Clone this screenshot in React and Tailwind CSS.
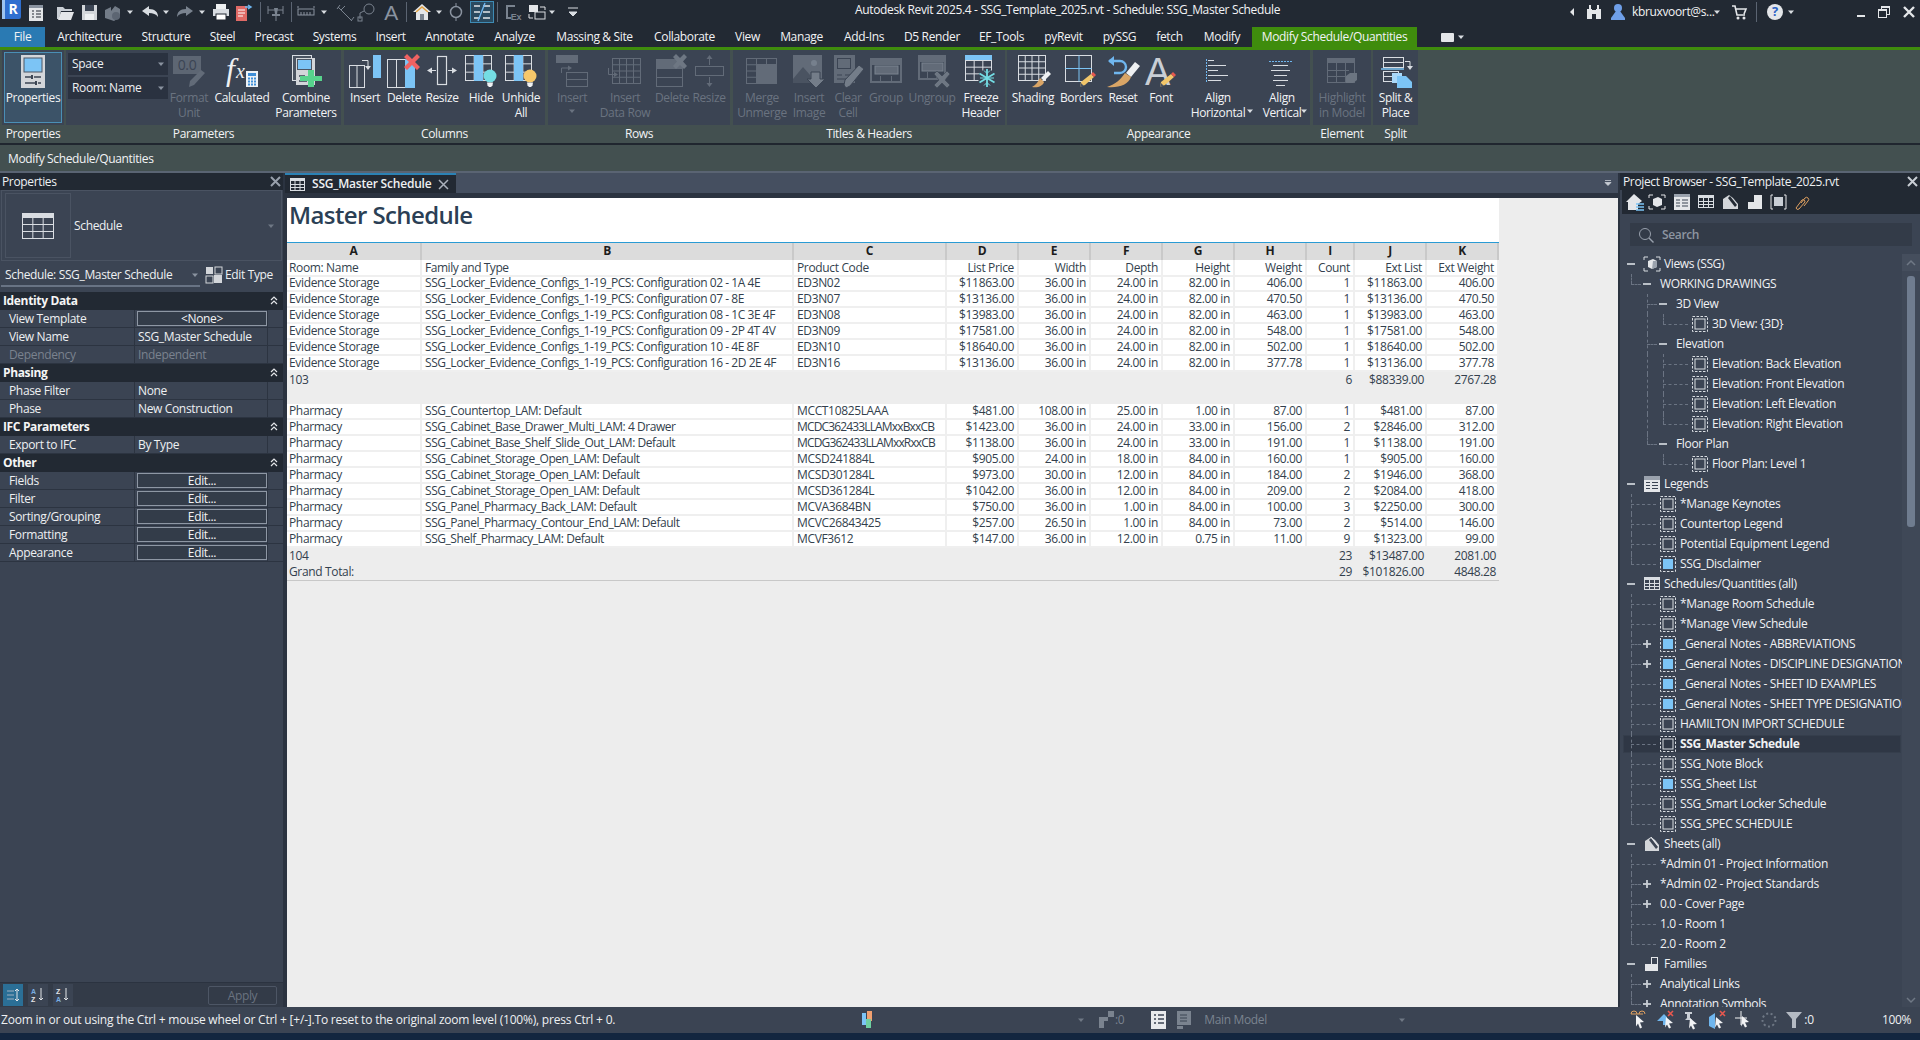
import React from "react";

const W = "#d9dde2";
const B = "#7cc4f5";
const D = "#626b78";

const S = ({ w = 32, h = 32, className = "", children }) => (
  <svg width={w} height={h} viewBox={`0 0 ${w} ${h}`} className={`shrink-0 overflow-visible ${className}`} fill="none">
    {children}
  </svg>
);

const Caret = ({ className = "", color = "#d9dde2" }) => (
  <svg width="8" height="8" viewBox="0 0 8 8" className={`shrink-0 ${className}`}>
    <path d="M1 2.5h6L4 6z" fill={color} />
  </svg>
);

const Grid = ({ x, y, w, h, cols, rows, stroke, sw = 1 }) => {
  const l = [];
  for (let i = 1; i < cols; i++) l.push(<path key={`c${i}`} d={`M${x + (w * i) / cols} ${y}v${h}`} />);
  for (let i = 1; i < rows; i++) l.push(<path key={`r${i}`} d={`M${x} ${y + (h * i) / rows}h${w}`} />);
  return (
    <g stroke={stroke} strokeWidth={sw}>
      <rect x={x} y={y} width={w} height={h} fill="none" />
      {l}
    </g>
  );
};

/* ---------- ribbon icons ---------- */
const Pencil = ({ x = 0, y = 0 }) => (
  <g transform={`translate(${x} ${y})`}>
    <path d="M11 2l3 3-9 8-5 2 1-5z" fill="#f2c66a" />
    <path d="M0 15l1-4 3 3z" fill="#4a5361" />
    <path d="M11 2l2-2 3 3-2 2z" fill="#e8584f" />
  </g>
);
const IProps = () => (
  <S w={28} h={34}>
    <rect x="2" y="0" width="24" height="33" fill="#d3d6da" />
    <rect x="5" y="3" width="18" height="14" fill={B} stroke="#4c5664" />
    <path d="M6 22h6M15 22h7M6 28h10M19 28h3" stroke="#3b4453" strokeWidth="1.4" />
    <path d="M13 20v4M17 26v4" stroke="#3b4453" strokeWidth="2" />
  </S>
);
const IFormat = () => (
  <S>
    <rect x="0" y="2" width="28" height="18" fill="#5d6673" />
    <text x="14" y="16" textAnchor="middle" fontSize="14" fill="#3b4453" fontFamily="Open Sans">0.0</text>
    <path d="M28 16l4 3-11 12-5 2 1-6z" fill="#626b78" />
  </S>
);
const ICalc = () => (
  <S h={33}>
    <text x="0" y="26" fontFamily="Liberation Serif" fontStyle="italic" fontSize="32" fill="#eef0f2">f</text>
    <text x="10" y="24" fontFamily="Liberation Serif" fontStyle="italic" fontSize="20" fill="#eef0f2">x</text>
    <rect x="20" y="17" width="12" height="16" fill="#eef2f6" />
    <rect x="22" y="19" width="8" height="3" fill="#3f8fd8" />
    <path d="M22 24.500h8M22 27.500h8M22 30.500h8" stroke="#3f8fd8" strokeWidth="1.800" strokeDasharray="2 1" />
  </S>
);
const ICombine = () => (
  <S w={32} h={34}>
    <rect x="2.500" y="1.500" width="19" height="25" stroke={W} fill="#4b5461" />
    <rect x="6" y="4" width="19" height="27" fill="#d3d6da" />
    <rect x="7.500" y="5.500" width="14" height="10" fill={B} stroke="#4c5664" />
    <path d="M9 22h6M9 27h8" stroke="#3b4453" strokeWidth="1.400" />
    <path d="M18 16h6v6h8v5h-8v6h-6v-6h-8v-5h8z" fill="#57d38c" />
  </S>
);
const IColInsert = () => (
  <S w={36} h={34}>
    <rect x="2.500" y="11.500" width="15" height="22" stroke={W} />
    <path d="M10 11.500v22" stroke={W} />
    <path d="M15 6.500h6v6" stroke={W} />
    <path d="M18 12h6l-3 4z" fill={W} />
    <rect x="26" y="1" width="8" height="23" fill={B} />
  </S>
);
const IColDelete = () => (
  <S w={36} h={34}>
    <rect x="1.500" y="5.500" width="27" height="28" stroke={W} />
    <path d="M10.500 5.500v28M19.500 5.500v28" stroke={W} />
    <rect x="19" y="5" width="10" height="29" fill={B} />
    <path d="M26 5l5-5 3 3-5 5 5 5-3 3-5-5-5 5-3-3 5-5-5-5 3-3z" fill="#f06262" />
  </S>
);
const IColResize = () => (
  <S w={32}>
    <rect x="11.500" y="2.500" width="9" height="28" stroke={W} strokeWidth="1.200" />
    <path d="M5 16.500h5M22 16.500h5" stroke={W} />
    <path d="M1 16.500l5-3v6zM31 16.500l-5-3v6z" fill={W} />
  </S>
);
const IHide = ({ bulb = "#74dde4" }) => (
  <S w={34} h={34}>
    <Grid x={1.500} y={1.500} w={26} h={25} cols={3} rows={3} stroke={W} />
    <rect x="10" y="1" width="9" height="26" fill={B} />
    <circle cx="26" cy="22" r="6.500" fill={bulb} />
    <path d="M23 28.500h6l-.5 3-1.500 1.500h-2l-1.500-1.500z" fill="#eef0f2" />
  </S>
);
const IRowInsert = () => (
  <S w={36} h={34}>
    <rect x="2" y="1" width="22" height="8" fill={D} />
    <path d="M7.500 19v-5h8" stroke={D} />
    <path d="M14 11.500l4 2.500-4 2.500z" fill={D} />
    <rect x="12.500" y="18.500" width="21" height="14" stroke={D} />
    <path d="M12.500 25.500h21" stroke={D} />
  </S>
);
const IRowData = () => (
  <S w={36} h={34}>
    <Grid x={5.500} y={4.500} w={28} h={25} cols={4} rows={4} stroke={D} />
    <path d="M1.500 14v6.500h7" stroke={D} />
    <path d="M7 18l4 2.500-4 2.500z" fill={D} />
  </S>
);
const IRowDelete = () => (
  <S w={32} h={34}>
    <rect x="0" y="5" width="27" height="9" fill={D} />
    <rect x="0.500" y="14.500" width="26" height="18" stroke={D} />
    <path d="M0.500 23.500h26" stroke={D} />
    <path d="M24 4l4-4 3 3-4 4.500 4 4.500-3 3-4-4-4 4-3-3 4-4.500-4-4.500 3-3z" fill="#6e7783" />
  </S>
);
const IRowResize = () => (
  <S w={31} h={34}>
    <rect x="1.500" y="12.500" width="28" height="9" stroke={D} />
    <path d="M15.500 5v6M15.500 23v7" stroke={D} />
    <path d="M15.500 1l3 4h-6zM15.500 33l3-4h-6z" fill={D} />
  </S>
);
const IMerge = () => (
  <S h={34}>
    <Grid x={0.500} y={4.500} w={30} h={25} cols={3} rows={4} stroke={D} />
    <rect x="10" y="10" width="21" height="20" fill={D} />
  </S>
);
const IImg = () => (
  <S h={34}>
    <rect x="0" y="1" width="29" height="28" fill={D} />
    <circle cx="21" cy="9" r="3" fill="#76808d" />
    <path d="M0 25l10-12 7 8 2 8H0z" fill="#4a5361" />
    <path d="M18 18h9v7h5l-9 9-9-9h4z" fill="#747d89" stroke="#3b4453" />
  </S>
);
const IClear = () => (
  <S h={34}>
    <rect x="2" y="1" width="21" height="28" fill={D} />
    <rect x="5.500" y="4.500" width="13" height="10" stroke="#3b4453" />
    <path d="M5 21h5M13 21h6M5 25h10" stroke="#3b4453" />
    <path d="M27 11l5 4-14 17-4 2-2-3 1-5z" fill="#747d89" stroke="#3b4453" />
  </S>
);
const IGroup = () => (
  <S h={34}>
    <rect x="0" y="4" width="32" height="25" fill={D} />
    <rect x="1.500" y="10.500" width="29" height="17" fill="#3b4453" stroke={D} />
    <path d="M10.500 22v6M21.500 22v6" stroke={D} />
    <rect x="5" y="12" width="23" height="8" fill={D} stroke="#7a838f" />
  </S>
);
const IUngroup = () => (
  <S h={34}>
    <rect x="2" y="1" width="28" height="25" fill={D} />
    <rect x="3.500" y="7.500" width="25" height="17" fill="#3b4453" stroke={D} />
    <rect x="6" y="9" width="21" height="8" fill={D} stroke="#7a838f" />
    <path d="M11.500 18v6M20.500 18v6" stroke={D} />
    <path d="M26 22l5-5 3 3-5 6 5 5-3 3-5-5-5 5-3-3 5-5-5-6 3-3z" fill="#6e7783" stroke="#3b4453" strokeWidth="0.600" />
  </S>
);
const IFreeze = () => (
  <S w={36} h={34}>
    <rect x="2" y="1" width="27" height="5" fill={B} />
    <Grid x={2.500} y={6.500} w={26} h={20} cols={3} rows={3} stroke={W} />
    <circle cx="24" cy="24" r="9" fill="#3b4453" />
    <path d="M24 15v18M16.500 19.500l15 9M16.500 28.500l15-9" stroke="#74dde4" strokeWidth="1.800" />
    <path d="M21 16.500l3 3 3-3M21 31.500l3-3 3 3M17 24h14" stroke="#74dde4" />
  </S>
);
const IShade = () => (
  <S w={36} h={34}>
    <Grid x={3.500} y={1.500} w={27} h={25} cols={4} rows={4} stroke={W} />
    <path d="M33 17l3 3-7 7-3-3z" fill="#eef0f2" />
    <path d="M25 24l4 4c-1 4-6 6-12 5 4-2 6-5 8-9z" fill="#d9a566" />
  </S>
);
const IBorders = () => (
  <S w={34} h={34}>
    <rect x="1.500" y="1.500" width="26" height="26" stroke={W} />
    <path d="M15 1.500v26M1.500 14.500h26" stroke={B} />
    <Pencil x={16} y={18} />
  </S>
);
const IReset = () => (
  <S w={34} h={34}>
    <path d="M3 7h11a6 6 0 0 1 0 12H8" stroke="#6fb6ee" strokeWidth="2.400" />
    <path d="M2 7l6-5v10z" fill="#6fb6ee" />
    <path d="M29 8l5 4-9 11-5-4z" fill="#eef0f2" />
    <path d="M19 19l6 4c-3 8-12 11-24 10 9-3 13-7 18-14z" fill="#d9a566" />
  </S>
);
const IFont = () => (
  <S w={34} h={34}>
    <text x="1" y="31" fontFamily="Liberation Sans" fontSize="38" fill="#c9ced5">A</text>
    <Pencil x={16} y={18} />
  </S>
);
const IAlignH = () => (
  <S h={34}>
    <path d="M4.500 5v24" stroke="#6fb6ee" strokeDasharray="2 1" />
    <path d="M6 6.500h6M6 11.500h18M6 16.500h10M6 21.500h20M6 26.500h13" stroke={W} />
  </S>
);
const IAlignV = () => (
  <S h={34}>
    <path d="M3 7.500h23" stroke="#6fb6ee" strokeDasharray="2 1" />
    <path d="M7 11.500h15M5 16.500h19M8 21.500h13M7 26.500h15M10 31.500h9" stroke={W} />
  </S>
);
const IHighlight = () => (
  <S w={34} h={34}>
    <rect x="2.500" y="4.500" width="27" height="24" stroke={D} />
    <rect x="2" y="4" width="28" height="5" fill={D} />
    <path d="M2 16.500h22M2 22.500h18M11.500 9v20M20.500 9v20" stroke={D} />
    <path d="M21 22l4-3h7v7l-4 3h-7z" fill="#6c7581" />
  </S>
);
const ISplit = () => (
  <S w={34} h={34}>
    <rect x="4.500" y="3.500" width="20" height="10" stroke={W} />
    <path d="M4.500 8.500h20" stroke={W} />
    <path d="M2 15h23" stroke={B} strokeWidth="1.500" />
    <rect x="4.500" y="17.500" width="15" height="10" stroke={W} />
    <path d="M4.500 22.500h15M26 7.500h5v5" stroke={W} />
    <path d="M28 12h6l-3 4z" fill={W} />
    <rect x="13" y="19" width="10" height="10" fill="#aad8f8" />
    <path d="M18 22h9l6 6v6H18z" fill={B} />
  </S>
);

/* ---------- ribbon buttons ---------- */
const RB = ({ w, icon, lines, off, caret }) => (
  <div className={`${w} shrink-0 flex flex-col items-center pt-[4px] relative`}>
    <div className="h-[34px] flex items-start justify-center">{icon}</div>
    <div className={`mt-[2px] text-center leading-[15px] whitespace-nowrap ${off ? "text-[#6a7380]" : "text-[#f2f3f5]"}`}>
      {lines.map((l) => (
        <div key={l}>{l}</div>
      ))}
    </div>
    {caret === "under" && <Caret className="mt-[2px]" color="#6a7380" />}
    {caret === "side" && <Caret className="absolute right-[1px] top-[57px]" />}
  </div>
);

const Panel = ({ w, ml = "ml-[2px]", label, children }) => (
  <div className={`${w} ${ml} shrink-0 flex flex-col h-full`}>
    <div className="h-[75px] bg-[#3b4453] flex overflow-hidden">{children}</div>
    <div className="h-[18px] bg-[#435050] text-center text-[#f2f3f5] leading-[18px]">{label}</div>
  </div>
);

const Combo = ({ t }) => (
  <div className="h-[22px] w-[100px] bg-[#2a3240] flex items-center justify-between pl-[4px] pr-[3px] text-[#eef0f2]">
    <span>{t}</span>
    <Caret color="#8a93a0" />
  </div>
);

/* ---------- title bar ---------- */
const T = ({ ml, w = 20, children }) => (
  <S w={w} h={20} className={ml}>
    {children}
  </S>
);
const Sep = ({ ml }) => <div className={`w-px h-[20px] bg-[#5b6472] ${ml}`} />;

const TitleBar = () => (
  <div className="h-[27px] pb-[4px] bg-[#222933] flex items-center text-[#f2f3f5] shrink-0 relative">
    <div className="ml-[2px] w-[19px] h-[20px] -mt-[5px] mr-0 bg-[#2f6fd0] border-l-[3px] border-[#9cc4f0] text-white font-bold text-[14px] leading-[20px] text-center rounded-br-[2px]">
      R
    </div>
    <T ml="ml-[5px]">
      <rect x="3" y="3" width="14" height="16" fill="#e4e6e9" />
      <rect x="3" y="3" width="14" height="3" fill="#8a93a0" />
      <path d="M6 9h2M10 9h5M6 12h2M10 12h5M6 15h2M10 15h5" stroke="#222933" />
    </T>
    <T ml="ml-[9px]">
      <path d="M2 5h6l2 2h7v2H6l-2 8H2z" fill="#c9ced5" />
      <path d="M6 10h13l-3 8H3z" fill="#e4e6e9" />
    </T>
    <T ml="ml-[4px]">
      <rect x="3" y="3" width="15" height="15" fill="#d3d6da" />
      <rect x="6" y="3" width="9" height="6" fill="#3b4453" />
      <rect x="6" y="12" width="9" height="6" fill="#eef0f2" />
    </T>
    <T ml="ml-[3px]">
      <path d="M3 8l6-3v4l4-5 5 3v8l-6 4-9-3z" fill="#737c88" />
      <circle cx="14" cy="14" r="4" fill="#5c6572" />
    </T>
    <Caret className="ml-[4px]" />
    <T ml="ml-[6px]">
      <path d="M2 9l7-5v3c6 0 9 3 9 8-2-3-5-4-9-4v3z" fill="#d9dde2" />
    </T>
    <Caret className="ml-[2px]" />
    <T ml="ml-[5px]">
      <path d="M18 9l-7-5v3c-6 0-9 3-9 8 2-3 5-4 9-4v3z" fill="#7a838f" />
    </T>
    <Caret className="ml-[3px]" />
    <T ml="ml-[5px]">
      <rect x="5" y="2" width="10" height="5" fill="#eef0f2" />
      <rect x="2" y="7" width="16" height="7" fill="#d9dde2" />
      <rect x="5" y="12" width="10" height="6" fill="#fff" stroke="#222933" />
    </T>
    <T ml="ml-[2px]">
      <rect x="3" y="4" width="11" height="15" fill="#e06a66" />
      <path d="M5 8h7M5 11h7M5 14h5" stroke="#fff" />
      <path d="M12 5h5M15 3l3 2-3 2" stroke="#6fb6ee" strokeWidth="1.500" />
    </T>
    <Sep ml="ml-[7px]" />
    <T ml="ml-[5px]">
      <path d="M2 4v8M17 4v8M2 8h15" stroke="#7a838f" />
      <path d="M8 6h4l-1 6h3v2H6v-2h3zM9.500 14h1v5h-1z" fill="#7a838f" />
    </T>
    <Sep ml="ml-[5px]" />
    <T ml="ml-[4px]">
      <rect x="2" y="7" width="16" height="6" stroke="#8a93a0" />
      <path d="M5 10v3M8 10v3M11 10v3M14 10v3M2 4v2M18 4v2" stroke="#8a93a0" />
    </T>
    <Caret className="ml-[4px]" />
    <T ml="ml-[7px]">
      <path d="M3 5l14 14M5 3L2 7M19 15l-3 4M10 4L6 8" stroke="#7a838f" />
    </T>
    <T ml="ml-[2px]">
      <circle cx="12" cy="7" r="5" stroke="#7a838f" />
      <path d="M7 9L3 11v6" stroke="#7a838f" />
      <rect x="1" y="15" width="4" height="4" stroke="#7a838f" />
    </T>
    <T ml="ml-[4px]">
      <text x="10" y="18" textAnchor="middle" fontFamily="Liberation Sans" fontSize="21" fill="#8a93a0">A</text>
    </T>
    <Sep ml="ml-[5px]" />
    <T ml="ml-[5px]">
      <path d="M10 2L1 10h3v8h12v-8h3z" fill="#e4e6e9" />
      <path d="M4 10l6-5 6 5" stroke="#e0a040" fill="none" strokeWidth="1.500" />
      <rect x="8" y="12" width="4" height="6" fill="#7a838f" />
    </T>
    <Caret className="ml-[3px]" />
    <T ml="ml-[3px]">
      <circle cx="10" cy="10" r="5.500" stroke="#8a93a0" strokeWidth="1.500" />
      <path d="M10 1v3M10 16v3" stroke="#8a93a0" />
    </T>
    <div className="ml-[4px] w-[24px] h-[22px] bg-[#2a4a60] border border-[#3e8bb5] flex items-center justify-center">
      <S w={20} h={18}>
        <path d="M2 3h6M2 9h6M2 15h6M11 3h7M11 9h7M11 15h7" stroke="#e4e6e9" strokeWidth="1.500" />
        <path d="M13 0L6 18" stroke="#6fb6ee" strokeWidth="1.400" />
      </S>
    </div>
    <Sep ml="ml-[3px]" />
    <T ml="ml-[5px]">
      <path d="M3 3h9v2H5v10h3v2H3z" fill="#7a838f" />
      <text x="13" y="18" textAnchor="middle" fontFamily="Liberation Sans" fontWeight="700" fontSize="9" fill="#7a838f">Ex</text>
    </T>
    <T ml="ml-[4px]">
      <rect x="2" y="3" width="9" height="7" fill="#e4e6e9" />
      <rect x="8" y="10" width="10" height="7" fill="none" stroke="#d9dde2" />
      <path d="M13 5h5v3M2 12v4h4" stroke="#e4e6e9" />
    </T>
    <Caret className="ml-[1px]" />
    <T ml="ml-[7px]">
      <path d="M5 6h10M6 10h8l-4 4z" stroke="#d9dde2" fill="#d9dde2" />
    </T>
    <span className="ml-[272px] -mt-[3px] whitespace-nowrap">Autodesk Revit 2025.4 - SSG_Template_2025.rvt - Schedule: SSG_Master Schedule</span>
    <div className="ml-auto flex items-center pr-[4px]">
      <S w={6} h={10}>
        <path d="M5 1v8L1 5z" fill="#e4e6e9" />
      </S>
      <S w={16} h={16} className="ml-[11px]">
        <path d="M1 5h5v10H1zM10 5h5v10h-5zM3 1h2v4H3zM11 1h2v4h-2zM6 6h4v4H6z" fill="#e4e6e9" />
      </S>
      <S w={16} h={18} className="ml-[8px]">
        <circle cx="8" cy="5" r="4" fill="#6f9fe8" />
        <path d="M6 8h4l5 7v2H1v-2z" fill="#6f9fe8" />
      </S>
      <span className="ml-[6px] w-[81px] whitespace-nowrap">kbruxvoort@s...</span>
      <Caret />
      <S w={16} h={16} className="ml-[10px]">
        <path d="M1 2h3l2 9h8M5 5h10l-2 5" stroke="#e4e6e9" strokeWidth="1.600" />
        <circle cx="7" cy="14" r="1.500" fill="#e4e6e9" />
        <circle cx="13" cy="14" r="1.500" fill="#e4e6e9" />
      </S>
      <Sep ml="ml-[9px]" />
      <div className="ml-[10px] w-[16px] h-[16px] rounded-full bg-[#e4e6e9] flex items-center justify-center text-[#2b62c4] font-bold text-[13px]">?</div>
      <Caret className="ml-[4px]" />
      <div className="ml-[62px] w-[8px] h-[2px] mt-[8px] bg-[#e4e6e9]" />
      <div className="ml-[13px] relative w-[12px] h-[12px]">
        <div className="absolute right-0 top-0 w-[9px] h-[9px] border border-t-2 border-[#e4e6e9]" />
        <div className="absolute left-0 bottom-0 w-[9px] h-[9px] border border-t-2 border-[#e4e6e9] bg-[#222933]" />
      </div>
      <S w={14} h={14} className="ml-[12px]">
        <path d="M2 2l10 10M12 2L2 12" stroke="#e4e6e9" strokeWidth="2.400" />
      </S>
    </div>
  </div>
);

const tabs = [
  ["Architecture", "w-[85px]"],
  ["Structure", "w-[68px]"],
  ["Steel", "w-[45px]"],
  ["Precast", "w-[58px]"],
  ["Systems", "w-[63px]"],
  ["Insert", "w-[49px]"],
  ["Annotate", "w-[69px]"],
  ["Analyze", "w-[61px]"],
  ["Massing & Site", "w-[99px]"],
  ["Collaborate", "w-[81px]"],
  ["View", "w-[45px]"],
  ["Manage", "w-[63px]"],
  ["Add-Ins", "w-[62px]"],
  ["D5 Render", "w-[74px]"],
  ["EF_Tools", "w-[65px]"],
  ["pyRevit", "w-[59px]"],
  ["pySSG", "w-[53px]"],
  ["fetch", "w-[47px]"],
  ["Modify", "w-[58px]"],
];

const TabBar = () => (
  <div className="h-[20px] bg-[#222933] flex items-stretch shrink-0 text-[#f2f3f5] leading-[20px]">
    <div className="w-[45px] bg-[#2a7ab3] text-center mr-[2px]">File</div>
    {tabs.map(([t, w]) => (
      <div key={t} className={`${w} text-center whitespace-nowrap`}>
        {t}
      </div>
    ))}
    <div className="ml-[1px] w-[165px] bg-[#3f8c0d] text-center whitespace-nowrap">Modify Schedule/Quantities</div>
    <div className="ml-[24px] flex items-center">
      <div className="w-[13px] h-[9px] rounded-[1px] bg-[#e4e6e9]" />
      <Caret className="ml-[3px]" />
    </div>
  </div>
);

const Ribbon = () => (
  <div className="h-[93px] bg-[#435050] flex shrink-0 pb-0 text-[#f2f3f5]">
    <Panel w="w-[62px]" label="Properties">
      <div className="m-[2px] w-[58px] h-[71px] border border-[#4a8fb5] bg-[#3c5368] flex flex-col items-center pt-[2px]">
        <IProps />
        <div className="mt-[1px] leading-[15px]">Properties</div>
      </div>
    </Panel>
    <Panel w="w-[275px]" label="Parameters">
      <div className="ml-[2px] w-[100px] pt-[3px] flex flex-col gap-[2px]">
        <Combo t="Space" />
        <Combo t="Room: Name" />
      </div>
      <RB w="w-[42px]" icon={<IFormat />} lines={["Format", "Unit"]} off />
      <RB w="w-[64px]" icon={<ICalc />} lines={["Calculated"]} />
      <RB w="w-[64px]" icon={<ICombine />} lines={["Combine", "Parameters"]} />
    </Panel>
    <Panel w="w-[201px]" ml="ml-[3px]" label="Columns">
      <div className="w-[1px]" />
      <RB w="w-[40px]" icon={<IColInsert />} lines={["Insert"]} />
      <RB w="w-[38px]" icon={<IColDelete />} lines={["Delete"]} />
      <RB w="w-[38px]" icon={<IColResize />} lines={["Resize"]} />
      <RB w="w-[40px]" icon={<IHide />} lines={["Hide"]} />
      <RB w="w-[40px]" icon={<IHide bulb="#f7c86a" />} lines={["Unhide", "All"]} />
    </Panel>
    <Panel w="w-[182px]" ml="ml-[3px]" label="Rows">
      <div className="w-[2px]" />
      <RB w="w-[44px]" icon={<IRowInsert />} lines={["Insert"]} off caret="under" />
      <RB w="w-[62px]" icon={<IRowData />} lines={["Insert", "Data Row"]} off />
      <RB w="w-[32px]" icon={<IRowDelete />} lines={["Delete"]} off />
      <RB w="w-[42px]" icon={<IRowResize />} lines={["Resize"]} off />
    </Panel>
    <Panel w="w-[272px]" ml="ml-[3px]" label="Titles & Headers">
      <div className="w-[3px]" />
      <RB w="w-[52px]" icon={<IMerge />} lines={["Merge", "Unmerge"]} off />
      <RB w="w-[42px]" icon={<IImg />} lines={["Insert", "Image"]} off />
      <RB w="w-[36px]" icon={<IClear />} lines={["Clear", "Cell"]} off />
      <RB w="w-[40px]" icon={<IGroup />} lines={["Group"]} off />
      <RB w="w-[52px]" icon={<IUngroup />} lines={["Ungroup"]} off />
      <RB w="w-[46px]" icon={<IFreeze />} lines={["Freeze", "Header"]} />
    </Panel>
    <Panel w="w-[303px]" label="Appearance">
      <div className="w-[2px]" />
      <RB w="w-[48px]" icon={<IShade />} lines={["Shading"]} />
      <RB w="w-[48px]" icon={<IBorders />} lines={["Borders"]} />
      <RB w="w-[36px]" icon={<IReset />} lines={["Reset"]} />
      <RB w="w-[40px]" icon={<IFont />} lines={["Font"]} />
      <RB w="w-[74px]" icon={<IAlignH />} lines={["Align", "Horizontal"]} caret="side" />
      <RB w="w-[54px]" icon={<IAlignV />} lines={["Align", "Vertical"]} caret="side" />
    </Panel>
    <Panel w="w-[58px]" ml="ml-[3px]" label="Element">
      <RB w="w-[58px]" icon={<IHighlight />} lines={["Highlight", "in Model"]} off />
    </Panel>
    <Panel w="w-[45px]" label="Split">
      <RB w="w-[45px]" icon={<ISplit />} lines={["Split &", "Place"]} />
    </Panel>
  </div>
);

/* ---------- properties panel ---------- */
const PRow = ({ a, b, btn, off }) => (
  <div className="h-[18px] flex border-b border-[#2c3441]">
    <div className={`w-[135px] pl-[9px] border-r border-[#2c3441] leading-[17px] ${off ? "text-[#7a828e]" : "text-[#eef0f2]"}`}>{a}</div>
    <div className={`w-[133px] border-r border-[#2c3441] pl-[2px] leading-[17px] ${off ? "text-[#7a828e]" : "text-[#eef0f2]"}`}>
      {btn ? (
        <div className="h-[15px] mt-[1px] w-[130px] border border-[#8e97a4] text-center leading-[14px] text-[#f2f3f5] bg-[#333c49]">{b}</div>
      ) : (
        <span className="pl-[1px]">{b}</span>
      )}
    </div>
  </div>
);

const PHead = ({ t }) => (
  <div className="h-[18px] bg-[#222933] flex items-center justify-between pl-[3px] pr-[5px] font-bold text-[#f5f5f5]">
    <span>{t}</span>
    <S w={8} h={10}>
      <path d="M1 4l3-3 3 3M1 8l3-3 3 3" stroke="#e4e6e9" strokeWidth="1.200" />
    </S>
  </div>
);

const PropsPanel = () => (
  <div className="w-[283px] shrink-0 bg-[#3b4453] flex flex-col text-[#eef0f2]">
    <div className="h-[17px] bg-[#222933] flex items-center justify-between pl-[2px] pr-[2px] shrink-0">
      <span>Properties</span>
      <S w={11} h={11}>
        <path d="M1 1l9 9M10 1l-9 9" stroke="#98a0ac" strokeWidth="2" />
      </S>
    </div>
    <div className="mx-[1px] h-[71px] border border-[#4a5362] flex items-center pl-[3px] shrink-0">
      <div className="w-[66px] h-[65px] border border-[#4a5362] flex items-center justify-center">
        <S w={32} h={26}>
          <rect x="0" y="0" width="32" height="5" fill={W} />
          <Grid x={0.500} y={4.500} w={31} h={21} cols={3} rows={3} stroke={W} />
        </S>
      </div>
      <span className="ml-[3px]">Schedule</span>
      <Caret className="ml-auto mr-[6px]" color="#6f7885" />
    </div>
    <div className="h-[27px] flex items-center pl-[5px] relative shrink-0">
      <span className="w-[186px] whitespace-nowrap">Schedule: SSG_Master Schedule</span>
      <Caret color="#8a93a0" />
      <S w={17} h={17} className="ml-[6px]">
        <rect x="1" y="1" width="7" height="7" fill="#d3d6da" />
        <rect x="10" y="1" width="7" height="7" stroke="#d3d6da" />
        <rect x="1" y="10" width="7" height="7" stroke="#d3d6da" />
        <rect x="9" y="9" width="8" height="8" fill="#d3d6da" />
      </S>
      <span className="ml-[3px] whitespace-nowrap">Edit Type</span>
      <div className="absolute left-[1px] bottom-[1px] w-[199px] h-[2px] bg-[#687384]" />
    </div>
    <div className="h-[4px] shrink-0" />
    <PHead t="Identity Data" />
    <PRow a="View Template" b="<None>" btn />
    <PRow a="View Name" b="SSG_Master Schedule" />
    <PRow a="Dependency" b="Independent" off />
    <PHead t="Phasing" />
    <PRow a="Phase Filter" b="None" />
    <PRow a="Phase" b="New Construction" />
    <PHead t="IFC Parameters" />
    <PRow a="Export to IFC" b="By Type" />
    <PHead t="Other" />
    <PRow a="Fields" b="Edit..." btn />
    <PRow a="Filter" b="Edit..." btn />
    <PRow a="Sorting/Grouping" b="Edit..." btn />
    <PRow a="Formatting" b="Edit..." btn />
    <PRow a="Appearance" b="Edit..." btn />
    <div className="flex-1" />
    <div className="h-[25px] bg-[#333b48] border-t border-[#2b3340] flex items-center pl-[3px] pr-[6px] shrink-0">
      <div className="w-[20px] h-[22px] bg-[#2b6f96] flex items-center justify-center">
        <S w={14} h={14}>
          <path d="M1 3h7M1 7h7M1 11h7" stroke="#9fb0c0" />
          <path d="M11 1v12M9 3l2-2 2 2M9 11l2 2 2-2" stroke="#e4e6e9" />
        </S>
      </div>
      <div className="ml-[5px] w-[20px] h-[22px] bg-[#3b4453] flex items-center justify-center">
        <S w={14} h={16}>
          <text x="0" y="7" fontSize="7" fontWeight="700" fontFamily="Liberation Sans" fill="#7aaee0">A</text>
          <text x="0" y="15" fontSize="7" fontWeight="700" fontFamily="Liberation Sans" fill="#e4e6e9">Z</text>
          <path d="M10 1v12M8 11l2 2 2-2" stroke="#e4e6e9" />
        </S>
      </div>
      <div className="ml-[5px] w-[20px] h-[22px] bg-[#3b4453] flex items-center justify-center">
        <S w={14} h={16}>
          <text x="0" y="7" fontSize="7" fontWeight="700" fontFamily="Liberation Sans" fill="#e4e6e9">Z</text>
          <text x="0" y="15" fontSize="7" fontWeight="700" fontFamily="Liberation Sans" fill="#7aaee0">A</text>
          <path d="M10 1v12M8 11l2 2 2-2" stroke="#e4e6e9" />
        </S>
      </div>
      <div className="ml-auto w-[69px] h-[19px] rounded-[2px] border border-[#4d5665] text-center leading-[17px] text-[#6a7380]">Apply</div>
    </div>
  </div>
);

/* ---------- schedule table ---------- */
const cols = "grid grid-cols-[135px_372px_153px_72px_72px_72px_72px_72px_48px_72px_72px]";
const letters = ["A", "B", "C", "D", "E", "F", "G", "H", "I", "J", "K"];
const fields = ["Room: Name", "Family and Type", "Product Code", "List Price", "Width", "Depth", "Height", "Weight", "Count", "Ext List", "Ext Weight"];
const ev = "Evidence Storage";
const lk = "SSG_Locker_Evidence_Configs_1-19_PCS: Configuration ";
const ph = "Pharmacy";
const group1 = [
  [ev, lk + "02 - 1A 4E", "ED3N02", "$11863.00", "36.00 in", "24.00 in", "82.00 in", "406.00", "1", "$11863.00", "406.00"],
  [ev, lk + "07 - 8E", "ED3N07", "$13136.00", "36.00 in", "24.00 in", "82.00 in", "470.50", "1", "$13136.00", "470.50"],
  [ev, lk + "08 - 1C 3E 4F", "ED3N08", "$13983.00", "36.00 in", "24.00 in", "82.00 in", "463.00", "1", "$13983.00", "463.00"],
  [ev, lk + "09 - 2P 4T 4V", "ED3N09", "$17581.00", "36.00 in", "24.00 in", "82.00 in", "548.00", "1", "$17581.00", "548.00"],
  [ev, lk + "10 - 4E 8F", "ED3N10", "$18640.00", "36.00 in", "24.00 in", "82.00 in", "502.00", "1", "$18640.00", "502.00"],
  [ev, lk + "16 - 2D 2E 4F", "ED3N16", "$13136.00", "36.00 in", "24.00 in", "82.00 in", "377.78", "1", "$13136.00", "377.78"],
];
const group2 = [
  [ph, "SSG_Countertop_LAM: Default", "MCCT10825LAAA", "$481.00", "108.00 in", "25.00 in", "1.00 in", "87.00", "1", "$481.00", "87.00"],
  [ph, "SSG_Cabinet_Base_Drawer_Multi_LAM: 4 Drawer", "MCDC362433LLAMxxBxxCB", "$1423.00", "36.00 in", "24.00 in", "33.00 in", "156.00", "2", "$2846.00", "312.00"],
  [ph, "SSG_Cabinet_Base_Shelf_Slide_Out_LAM: Default", "MCDG362433LLAMxxRxxCB", "$1138.00", "36.00 in", "24.00 in", "33.00 in", "191.00", "1", "$1138.00", "191.00"],
  [ph, "SSG_Cabinet_Storage_Open_LAM: Default", "MCSD241884L", "$905.00", "24.00 in", "18.00 in", "84.00 in", "160.00", "1", "$905.00", "160.00"],
  [ph, "SSG_Cabinet_Storage_Open_LAM: Default", "MCSD301284L", "$973.00", "30.00 in", "12.00 in", "84.00 in", "184.00", "2", "$1946.00", "368.00"],
  [ph, "SSG_Cabinet_Storage_Open_LAM: Default", "MCSD361284L", "$1042.00", "36.00 in", "12.00 in", "84.00 in", "209.00", "2", "$2084.00", "418.00"],
  [ph, "SSG_Panel_Pharmacy_Back_LAM: Default", "MCVA3684BN", "$750.00", "36.00 in", "1.00 in", "84.00 in", "100.00", "3", "$2250.00", "300.00"],
  [ph, "SSG_Panel_Pharmacy_Contour_End_LAM: Default", "MCVC26843425", "$257.00", "26.50 in", "1.00 in", "84.00 in", "73.00", "2", "$514.00", "146.00"],
  [ph, "SSG_Shelf_Pharmacy_LAM: Default", "MCVF3612", "$147.00", "36.00 in", "12.00 in", "0.75 in", "11.00", "9", "$1323.00", "99.00"],
];

const Row = ({ cells, head }) => (
  <div className={`${cols} h-[16px] bg-white`}>
    {cells.map((c, i) => (
      <div
        key={i}
        className={`border-r-2 border-b-2 border-[#efefef] whitespace-nowrap ${head ? "leading-[15px]" : "leading-[14px]"} ${i === 1 ? "tracking-[-0.45px]" : ""} ${c.length > 18 && i === 2 ? "tracking-[-0.85px]" : ""} ${i < 3 ? (i === 0 ? "pl-[2px]" : "pl-[3px]") : "text-right pr-[3px]"}`}
      >
        {c}
      </div>
    ))}
  </div>
);

const Sub = ({ t, n, a, b }) => (
  <div className={`${cols} h-[16px] bg-[#ededed] leading-[16px]`}>
    <div className="col-span-8 pl-[2px] whitespace-nowrap">{t}</div>
    <div className="text-right pr-[3px]">{n}</div>
    <div className="text-right pr-[3px]">{a}</div>
    <div className="text-right pr-[3px]">{b}</div>
  </div>
);

const Sheet = () => (
  <div className="w-[1212px] text-[#333f4d] shrink-0">
    <div className="bg-white text-[24px] leading-[34px] pl-[2px] font-semibold tracking-[-0.6px] text-[#2b3f55] border-b border-[#2a9bd4] box-content h-[44px]">Master Schedule</div>
    <div className={`${cols} h-[17px] bg-[#dcdcdc]`}>
      {letters.map((l) => (
        <div key={l} className="text-center font-bold text-[#1c1c1c] leading-[15px] border-r-2 border-[#c9c9c9]">
          {l}
        </div>
      ))}
    </div>
    <Row cells={fields} head />
    {group1.map((r, i) => (
      <Row key={i} cells={r} />
    ))}
    <Sub t="103" n="6" a="$88339.00" b="2767.28" />
    <div className="h-[16px] bg-[#ededed]" />
    {group2.map((r, i) => (
      <Row key={i} cells={r} />
    ))}
    <Sub t="104" n="23" a="$13487.00" b="2081.00" />
    <Sub t="Grand Total:" n="29" a="$101826.00" b="4848.28" />
    <div className="h-[1px] bg-[#c8c8c8]" />
  </div>
);

const Center = () => (
  <div className="w-[1333px] ml-[2px] shrink-0 flex flex-col">
    <div className="h-[20px] bg-[#454f60] flex items-stretch shrink-0">
      <div className="w-[171px] bg-[#222933] border-t-2 border-[#2b82b5] flex items-center pl-[5px] text-[#eef0f2] font-semibold tracking-[-0.2px]">
        <S w={15} h={13}>
          <rect x="0.500" y="0.500" width="14" height="12" stroke={W} />
          <rect x="0" y="0" width="15" height="3" fill={W} />
          <path d="M5 3v10M10 3v10M0 6.500h15M0 9.500h15" stroke={W} />
        </S>
        <span className="ml-[7px] whitespace-nowrap">SSG_Master Schedule</span>
        <S w={11} h={11} className="ml-[7px]">
          <path d="M1 1l9 9M10 1l-9 9" stroke="#aab1bc" strokeWidth="1.500" />
        </S>
      </div>
      <div className="ml-auto flex items-center pr-[6px]">
        <S w={8} h={8}>
          <path d="M1 1.500h6M1 3.500h6l-3 3z" stroke="#c9ced5" fill="#c9ced5" strokeWidth="0.800" />
        </S>
      </div>
    </div>
    <div className="h-[5px] bg-[#2b3340] shrink-0" />
    <div className="flex-1 flex min-h-0">
      <div className="w-[2px] bg-[#2b3340] shrink-0" />
      <div className="flex-1 bg-[#ededed] flex items-start overflow-hidden">
        <Sheet />
      </div>
    </div>
  </div>
);

/* ---------- project browser ---------- */
const Dash = ({ fill }) => (
  <S w={16} h={16} className="mr-[4px]">
    <rect x="0.500" y="0.500" width="15" height="15" stroke="#d9dde2" strokeDasharray="2.500 1.500" />
    <rect x="3" y="3" width="10" height="10" stroke={fill ? "none" : "#d9dde2"} fill={fill ? B : "none"} />
  </S>
);
const Rooticon = ({ k }) => (
  <S w={16} h={16} className="mr-[4px]">
    {k === "3d" && (
      <>
        <path d="M0 4V1h4M12 1h4v3M0 12v3h4M12 15h4v-3" stroke="#d9dde2" />
        <path d="M4 5l5-2 4 2v6l-5 2-4-2z" fill="#e4e6e9" />
        <path d="M9 5l4 0v6l-5 2z" fill="#9aa2ad" />
      </>
    )}
    {k === "legend" && (
      <>
        <rect x="0" y="0" width="16" height="16" fill="#e4e6e9" />
        <rect x="0" y="0" width="16" height="4" fill="#9aa2ad" />
        <path d="M2 6.500h4M2 9.500h4M2 12.500h4M8 6.500h6M8 9.500h6M8 12.500h6" stroke="#3b4453" />
      </>
    )}
    {k === "sched" && (
      <>
        <rect x="0.500" y="1.500" width="15" height="12" stroke={W} />
        <rect x="0" y="1" width="16" height="3" fill={W} />
        <path d="M5.500 4v9M10.500 4v9M0 7.500h16M0 10.500h16" stroke={W} />
      </>
    )}
    {k === "sheet" && (
      <>
        <path d="M1 15V5l6-4 4 3 4 5v6z" fill="#d3d6da" />
        <path d="M7 2l7 9-2 2-7-9z" fill="#3b4453" />
        <path d="M7 1l7 9" stroke="#e4e6e9" />
      </>
    )}
    {k === "fam" && (
      <path d="M1 15V8h6V1h7v14z M8 2v6h5V2z" fillRule="evenodd" fill="#e4e6e9" />
    )}
  </S>
);

const L = (t, o = {}) => ({ t, ...o });
const tree = [
  L("Views (SSG)", { root: "3d", toggle: "-", kids: [
    L("WORKING DRAWINGS", { toggle: "-", kids: [
      L("3D View", { toggle: "-", kids: [L("3D View: {3D}", { v: 1 })] }),
      L("Elevation", { toggle: "-", kids: [
        L("Elevation: Back Elevation", { v: 1 }),
        L("Elevation: Front Elevation", { v: 1 }),
        L("Elevation: Left Elevation", { v: 1 }),
        L("Elevation: Right Elevation", { v: 1 }),
      ] }),
      L("Floor Plan", { toggle: "-", kids: [L("Floor Plan: Level 1", { v: 1 })] }),
    ] }),
  ] }),
  L("Legends", { root: "legend", toggle: "-", kids: [
    L("*Manage Keynotes", { v: 1 }),
    L("Countertop Legend", { v: 1 }),
    L("Potential Equipment Legend", { v: 1 }),
    L("SSG_Disclaimer", { v: 2 }),
  ] }),
  L("Schedules/Quantities (all)", { root: "sched", toggle: "-", kids: [
    L("*Manage Room Schedule", { v: 1 }),
    L("*Manage View Schedule", { v: 1 }),
    L("_General Notes - ABBREVIATIONS", { v: 2, toggle: "+" }),
    L("_General Notes - DISCIPLINE DESIGNATIONS", { v: 2, toggle: "+" }),
    L("_General Notes - SHEET ID EXAMPLES", { v: 2 }),
    L("_General Notes - SHEET TYPE DESIGNATIONS", { v: 2 }),
    L("HAMILTON IMPORT SCHEDULE", { v: 1 }),
    L("SSG_Master Schedule", { v: 1, active: 1 }),
    L("SSG_Note Block", { v: 1 }),
    L("SSG_Sheet List", { v: 2 }),
    L("SSG_Smart Locker Schedule", { v: 1 }),
    L("SSG_SPEC SCHEDULE", { v: 1 }),
  ] }),
  L("Sheets (all)", { root: "sheet", toggle: "-", kids: [
    L("*Admin 01 - Project Information"),
    L("*Admin 02 - Project Standards", { toggle: "+" }),
    L("0.0 - Cover Page", { toggle: "+" }),
    L("1.0 - Room 1"),
    L("2.0 - Room 2"),
  ] }),
  L("Families", { root: "fam", toggle: "-", kids: [
    L("Analytical Links", { toggle: "+" }),
    L("Annotation Symbols", { toggle: "+" }),
  ] }),
];

const flatten = (nodes, d = 0, guides = []) => {
  const out = [];
  nodes.forEach((n, i) => {
    const last = i === nodes.length - 1;
    out.push({ ...n, d, last, guides });
    if (n.kids) out.push(...flatten(n.kids, d + 1, d > 0 && !last ? [...guides, d] : guides));
  });
  return out;
};

const TreeRow = ({ n }) => {
  const vx = 16 * n.d - 5;
  const contentStart = 24 + 16 * n.d;
  const hEnd = n.toggle ? 5 + 16 * n.d : contentStart - 4;
  return (
    <div className="relative h-[20px] flex items-center whitespace-nowrap text-[#f0f1f3]">
      {n.active && <div className="absolute left-[3px] right-[1px] top-[1px] bottom-[1px] bg-[#2f3745] border border-[#353e4c]" />}
      {n.guides.map((g) => (
        <div key={g} className="absolute top-0 bottom-0 border-l border-dashed border-[#6b7483]" style={{ left: 16 * g - 5 }} />
      ))}
      {n.d > 0 && (
        <>
          <div className={`absolute top-0 border-l border-dashed border-[#6b7483] ${n.last ? "h-[10px]" : "h-[20px]"}`} style={{ left: vx }} />
          <div className="absolute top-[10px] border-t border-dashed border-[#6b7483]" style={{ left: vx, width: hEnd - vx }} />
        </>
      )}
      <div className="shrink-0 relative" style={{ width: 3 + 16 * n.d }} />
      <div className="w-[16px] h-[16px] mr-[5px] shrink-0 relative flex items-center justify-center">
        {n.toggle && (
          <S w={8} h={8}>
            <path d="M0 4h8" stroke="#c9ced5" strokeWidth="1.800" />
            {n.toggle === "+" && <path d="M4 0v8" stroke="#c9ced5" strokeWidth="1.800" />}
          </S>
        )}
      </div>
      <div className="relative flex items-center">
        {n.root && <Rooticon k={n.root} />}
        {n.v && <Dash fill={n.v === 2} />}
        <span className={n.active ? "font-bold" : ""}>{n.t}</span>
      </div>
    </div>
  );
};

const Browser = () => (
  <div className="w-[300px] ml-[2px] shrink-0 bg-[#3b4453] flex flex-col text-[#eef0f2] min-h-0">
    <div className="h-[17px] bg-[#222933] flex items-center justify-between pl-[3px] pr-[2px] shrink-0">
      <span className="whitespace-nowrap">Project Browser - SSG_Template_2025.rvt</span>
      <S w={11} h={11}>
        <path d="M1 1l9 9M10 1l-9 9" stroke="#c9ced5" strokeWidth="2" />
      </S>
    </div>
    <div className="h-[24px] bg-[#222933] flex items-center shrink-0 ml-[2px] pl-[4px]">
      <S w={18} h={18}>
        <path d="M8 1L0 9h2v8h10v-6l4-3z" fill="#e4e6e9" />
        <path d="M10 11h8M10 14h8M10 17h8" stroke="#7cc4f5" strokeWidth="1.500" />
      </S>
      <S w={16} h={16} className="ml-[5px]">
        <path d="M0 4V1h4M12 1h4v3M0 12v3h4M12 15h4v-3" stroke="#e4e6e9" />
        <path d="M4 5l5-2 4 2v6l-5 2-4-2z" fill="#e4e6e9" />
      </S>
      <S w={16} h={16} className="ml-[9px]">
        <rect x="0" y="0" width="16" height="16" fill="#e4e6e9" />
        <rect x="0" y="0" width="16" height="3" fill="#9aa2ad" />
        <path d="M2 6h4M2 9h4M2 12h4M8 6h6M8 9h6M8 12h6" stroke="#3b4453" />
      </S>
      <S w={16} h={14} className="ml-[8px]">
        <rect x="0.500" y="0.500" width="15" height="12" stroke={W} />
        <rect x="0" y="0" width="16" height="3" fill={W} />
        <path d="M5.500 3v10M10.500 3v10M0 6.500h16M0 9.500h16" stroke={W} />
      </S>
      <S w={16} h={16} className="ml-[9px]">
        <path d="M0 15V5l6-4 4 3 5 6v5z" fill="#d3d6da" />
        <path d="M7 2l7 9-2 2-7-9z" fill="#222933" />
      </S>
      <S w={14} h={14} className="ml-[9px]">
        <path d="M0 14V7h6V0h8v14z M1 1v5h0z" fill="#e4e6e9" />
        <path d="M0 0h5v6H0z" fill="#222933" />
      </S>
      <S w={15} h={16} className="ml-[9px]">
        <path d="M2 1H0v14h2M13 1h2v14h-2" stroke="#e4e6e9" />
        <rect x="3" y="3" width="9" height="9" fill="#c9ced5" />
      </S>
      <S w={15} h={13} className="ml-[9px]">
        <path d="M1 12L7 4a2 2 0 0 1 3 2L4 13a2 2 0 0 1-3-1zM6 7l4-5a2 2 0 0 1 3 3L9 10" stroke="#e0a060" />
      </S>
    </div>
    <div className="h-[40px] shrink-0 pl-[10px] pt-[9px]">
      <div className="h-[23px] w-[282px] bg-[#333b48] flex items-center pl-[8px] text-[#8d95a1] font-semibold">
        <S w={16} h={16}>
          <circle cx="7" cy="7" r="5.500" stroke="#98a0ac" />
          <path d="M11 11l4.500 4.500" stroke="#98a0ac" strokeWidth="1.400" />
        </S>
        <span className="ml-[8px]">Search</span>
      </div>
    </div>
    <div className="flex-1 flex min-h-0">
      <div className="w-[282px] overflow-hidden">
        {flatten(tree).map((n, i) => (
          <TreeRow key={i} n={n} />
        ))}
      </div>
      <div className="w-[18px] bg-[#3f4857] flex flex-col items-center relative">
        <div className="h-[17px] w-full bg-[#454e5d] flex items-center justify-center">
          <S w={10} h={6}>
            <path d="M1 5l4-4 4 4" stroke="#6f7885" strokeWidth="1.500" />
          </S>
        </div>
        <div className="mt-[5px] w-[8px] h-[251px] rounded-[3px] bg-[#6f7c8f]" />
        <div className="mt-auto mb-[4px]">
          <S w={10} h={6}>
            <path d="M1 1l4 4 4-4" stroke="#6f7885" strokeWidth="1.500" />
          </S>
        </div>
      </div>
    </div>
  </div>
);

/* ---------- status bar ---------- */
const StatusBar = () => (
  <div className="h-[26px] bg-[#3b4453] flex items-center shrink-0 text-[#eef0f2] pl-[1px]">
    <span className="w-[860px] whitespace-nowrap tracking-[-0.2px]">Zoom in or out using the Ctrl + mouse wheel or Ctrl + [+/-].To reset to the original zoom level (100%), press Ctrl + 0.</span>
    <S w={16} h={18}>
      <rect x="1" y="2" width="4" height="12" fill="#7cc4f5" />
      <rect x="6" y="0" width="5" height="10" fill="#f0a070" />
      <rect x="5" y="8" width="5" height="9" fill="#6fd0a0" />
    </S>
    <Caret className="ml-[200px]" color="#6f7885" />
    <S w={15} h={18} className="ml-[14px]">
      <path d="M5 6h4V0h6v6H9v4H5v7H0V6z" fill="#7a838f" />
    </S>
    <span className="ml-[1px] text-[#7a838f]">:0</span>
    <S w={16} h={18} className="ml-[27px]">
      <rect x="0" y="0" width="15" height="18" fill="#e8eaec" />
      <path d="M3 4h2M7 4h6M3 8h2M7 8h6M3 12h2M7 12h6" stroke="#3b4453" strokeWidth="1.400" />
    </S>
    <S w={16} h={18} className="ml-[9px]">
      <rect x="1" y="0" width="14" height="14" fill="#7a838f" />
      <path d="M4 4h7M4 7h7M4 10h7" stroke="#3b4453" />
      <path d="M1 15h6v3H1z" fill="#7a838f" />
    </S>
    <span className="ml-[12px] w-[194px] text-[#7a838f]">Main Model</span>
    <Caret color="#6f7885" />
    <S w={18} h={20} className="ml-[223px]">
      <path d="M2 4a3 3 0 0 1 6 0M10 4a3 3 0 0 1 6 0" stroke="#e0a060" />
      <path d="M2 4h12" stroke="#e0a060" />
      <path d="M7 5l8 7-4 .5 2 5-2 1-2-5-2 3z" fill="#f2f3f5" />
    </S>
    <S w={18} h={20} className="ml-[9px]">
      <path d="M1 11L8 4l3 3v8H7v-4z" fill="#6fb6ee" />
      <path d="M10 7l7 6-4 .5 2 4-2 1-2-4-2 3z" fill="#f2f3f5" />
      <path d="M12 1l5 5M17 1l-5 5" stroke="#e8584f" strokeWidth="1.600" />
    </S>
    <S w={18} h={20} className="ml-[8px]">
      <path d="M3 2h7v2H8v4l2 2H3l2-2V4H3z" fill="#c9ced5" />
      <path d="M8 8l7 6-4 .5 2 4-2 1-2-4-2 3z" fill="#f2f3f5" />
    </S>
    <S w={18} h={20} className="ml-[8px]">
      <path d="M1 7l6-4v16l-6-3z" fill="#6fb6ee" />
      <path d="M8 7l7 6-4 .5 2 4-2 1-2-4-2 3z" fill="#f2f3f5" />
      <path d="M12 1l5 5M17 1l-5 5" stroke="#e8584f" strokeWidth="1.600" />
    </S>
    <S w={18} h={20} className="ml-[8px]">
      <path d="M7 1v14M1 8h12" stroke="#f2f3f5" />
      <path d="M8 6l7 6-4 .5 2 4-2 1-2-4-2 3z" fill="#f2f3f5" />
    </S>
    <S w={18} h={20} className="ml-[8px]">
      <circle cx="9" cy="10" r="6.500" stroke="#6f7885" strokeWidth="2" strokeDasharray="2 2.500" />
    </S>
    <S w={18} h={20} className="ml-[7px]">
      <path d="M1 2h16l-6 7v9H7V9z" fill="#b4bac3" />
    </S>
    <span className="ml-[1px]">:0</span>
    <span className="ml-auto pr-[9px]">100%</span>
  </div>
);

export default function App() {
  return (
    <div className="w-[1920px] h-[1040px] overflow-hidden flex flex-col font-['Open_Sans','Noto_Sans',sans-serif] text-[12px] tracking-[-0.35px] bg-[#2b3340]">
      <TitleBar />
      <TabBar />
      <div className="h-[3px] bg-[#3f8c0d] shrink-0" />
      <Ribbon />
      <div className="h-[2px] bg-[#20262f] shrink-0" />
      <div className="h-[26px] bg-[#435050] flex items-center pl-[8px] pt-[2px] text-[#f2f3f5] shrink-0">Modify Schedule/Quantities</div>
      <div className="h-[2px] bg-[#5a6473] shrink-0" />
      <div className="flex-1 flex min-h-0 bg-[#2b3340]">
        <PropsPanel />
        <Center />
        <Browser />
      </div>
      <StatusBar />
      <div className="h-[7px] bg-[#13263f] shrink-0" />
    </div>
  );
}
